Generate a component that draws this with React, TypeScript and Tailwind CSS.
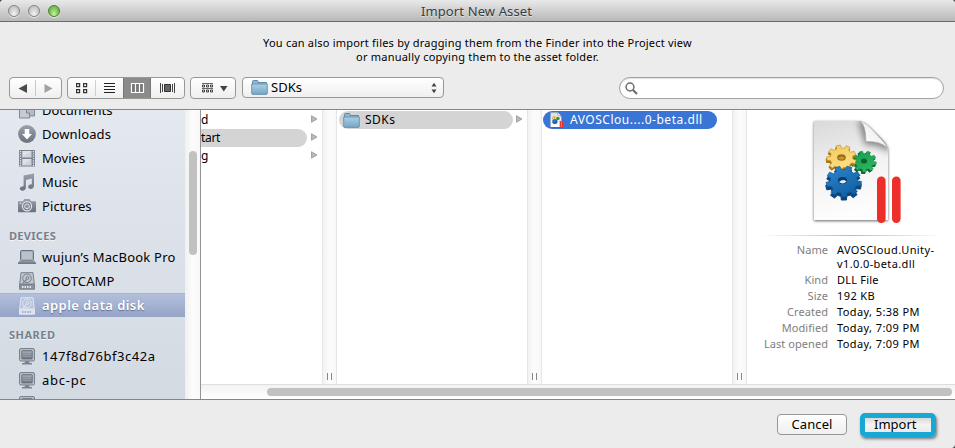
import React from "react";

type IconProps = { selected?: boolean };

const Tone = ({ id, light }: { id: string; light?: boolean }) => (
  <defs>
    <linearGradient id={id} x1="0" y1="0" x2="0" y2="1">
      <stop offset="0" stopColor={light ? "#e6eaf2" : "#9aa1ab"} />
      <stop offset="1" stopColor={light ? "#ced6e6" : "#69727e"} />
    </linearGradient>
  </defs>
);

const DocumentsIcon = () => (
  <svg width="18" height="18" viewBox="0 0 18 18">
    <path d="M1.500 7.500h10v9.500h-10z" fill="#c5cbd3" stroke="#7d8692" />
    <path d="M8.500 1.500h8v13.500h-5v-3h-3z" fill="#b4bbc5" stroke="#7d8692" />
  </svg>
);

const DownloadsIcon = () => (
  <svg width="18" height="18" viewBox="0 0 18 18">
    <Tone id="dl" />
    <circle cx="9" cy="9" r="8.900" fill="url(#dl)" />
    <path d="M6.700 4h4.600v5h2.700L9 14.500 4 9h2.700z" fill="#fff" />
  </svg>
);

const MoviesIcon = () => (
  <svg width="18" height="18" viewBox="0 0 18 18">
    <rect x="1" y="1" width="16" height="16.500" fill="#7a838f" />
    <path d="M2.500 2v15M15.500 2v15" stroke="#e6eaf0" strokeWidth="1.300" strokeDasharray="1.200 1.100" />
    <path d="M4.500 2h9v6.500h-9zM4.500 10h9v6.500h-9z" fill="#cfd5dd" />
    <path d="M4.500 2h9L4.500 8.500zM4.500 10h9l-9 6.500z" fill="#dde2e9" />
  </svg>
);

const MusicIcon = () => (
  <svg width="18" height="18" viewBox="0 0 18 18">
    <Tone id="mu" />
    <path d="M5.600 2.600 16 .4v12.400c0 2-1.300 3.100-3.200 3.100-1.600 0-2.700-.8-2.700-2.100 0-1.700 1.700-2.700 3.700-2.400V5.600L7.900 6.900v7.700c0 2-1.400 3.200-3.400 3.200-1.600 0-2.700-.9-2.700-2.200 0-1.700 1.700-2.700 3.800-2.400z" fill="url(#mu)" />
  </svg>
);

const PicturesIcon = () => (
  <svg width="18" height="18" viewBox="0 0 18 18">
    <Tone id="pi" />
    <path d="M1 4.200h4L6.300 2h5.400L13 4.200h4c.6 0 1 .4 1 1v9c0 .6-.4 1-1 1H1c-.6 0-1-.4-1-1v-9c0-.6.400-1 1-1z" fill="url(#pi)" />
    <circle cx="9" cy="9.300" r="4.600" fill="#7b848f" stroke="#dfe3e9" strokeWidth="1.200" />
    <circle cx="9" cy="9.300" r="2.400" fill="#8d95a1" stroke="#dfe3e9" />
    <circle cx="2.600" cy="6.200" r=".8" fill="#e3e6eb" />
  </svg>
);

const LaptopIcon = () => (
  <svg width="18" height="18" viewBox="0 0 18 18">
    <Tone id="lp" />
    <rect x="2.500" y="2.500" width="13" height="10" rx="1" fill="#a5adb8" stroke="#69727e" />
    <path d="M4 4h10v7H4z" fill="#bac1ca" />
    <path d="M1.500 12.500h15l1.500 2.500v1H0v-1z" fill="url(#lp)" />
  </svg>
);

const DiskIcon = ({ selected }: IconProps) => {
  const edge = selected ? "#e0e6f1" : "#77808b";
  const body = selected ? "#b9c4dc" : "#c1c7cf";
  return (
    <svg width="18" height="18" viewBox="0 0 18 18">
      <path d="M3 .7h12l1.300 11.300H1.700z" fill={body} stroke={edge} />
      <path d="M1.500 12.500h15v4.700h-15z" fill={selected ? "#dce3ef" : "#8b939e"} stroke={edge} />
      <circle cx="9" cy="6.300" r="4.300" fill="none" stroke={edge} strokeWidth="1" />
      <circle cx="9.500" cy="6" r="1.400" fill="none" stroke={edge} />
      <path d="M5 11l3.500-3.500" stroke={edge} strokeWidth="1.300" />
      <path d="M4 15h10" stroke={selected ? "#a4b1cf" : "#e0e4e9"} strokeWidth="2" strokeDasharray="1.500 1" />
    </svg>
  );
};

const MonitorIcon = () => (
  <svg width="18" height="18" viewBox="0 0 18 18">
    <Tone id="mo" />
    <rect x="1.500" y="1.500" width="15" height="12.500" rx="1.500" fill="#b7bec8" stroke="#78818c" />
    <rect x="3.700" y="3.500" width="10.600" height="8.500" rx=".8" fill="url(#mo)" stroke="#69727e" strokeWidth=".8" />
    <path d="M4.500 5.500h9M4.500 7.500h9M4.500 9.500h9" stroke="#a8b0bb" strokeWidth=".6" />
    <path d="M7 14h4l.5 2H14v1.500H4V16h2.500z" fill="#7a838e" />
  </svg>
);

const FolderIcon = () => (
  <svg width="17" height="15" viewBox="0 0 17 15" className="shrink-0">
    <defs>
      <linearGradient id="fold" x1="0" y1="0" x2="0" y2="1">
        <stop offset="0" stopColor="#abd0e6" />
        <stop offset="1" stopColor="#75a6c6" />
      </linearGradient>
    </defs>
    <path d="M1.500 3V1.500c0-.6.300-1 1-1h3.600c.6 0 .9.400 1 1L7.200 2.500h8.300v3h-14z" fill="#8fb9d3" stroke="#608ba6" />
    <path d="M.7 4h15.600v9.200c0 .8-.4 1.200-1 1.200H1.700c-.6 0-1-.4-1-1.200z" fill="url(#fold)" stroke="#6590ac" strokeWidth=".9" />
  </svg>
);

/* Outline of a toothed wheel with flat-topped teeth. */
function gearPath(cx: number, cy: number, r: number, teeth: number, turn: number) {
  const points: string[] = [];
  const shape: [number, number][] = [[-0.3, 0.77], [-0.21, 1], [0.21, 1], [0.3, 0.77]];
  for (let i = 0; i < teeth; i++) {
    for (const [offset, scale] of shape) {
      const a = ((i + offset) / teeth) * Math.PI * 2 + turn;
      points.push(`${(cx + Math.cos(a) * r * scale).toFixed(2)} ${(cy + Math.sin(a) * r * scale * 0.88).toFixed(2)}`);
    }
  }
  return `M${points.join("L")}Z`;
}

const Gears = () => (
  <g strokeLinejoin="round">
    <path d={gearPath(56.500, 44, 12, 9, 0.2)} fill="#09652d" stroke="#09652d" />
    <path d={gearPath(57.500, 42.500, 12, 9, 0.2)} fill="url(#gg)" stroke="#128940" strokeWidth=".5" />
    <ellipse cx="57" cy="42" rx="3" ry="2.500" fill="#075f2a" />
    <path d={gearPath(34, 41, 14.800, 9, 0.3)} fill="#a97510" stroke="#a97510" />
    <path d={gearPath(34.500, 39, 14.800, 9, 0.3)} fill="url(#gy)" stroke="#bd8b24" strokeWidth=".6" />
    <ellipse cx="34.500" cy="38.500" rx="4.300" ry="3.200" fill="#9b6d12" />
    <path d="M31 39q3.500-3 7 0-3.500 3.500-7 0z" fill="#c7952e" />
    <path d={gearPath(36.500, 65.500, 17.800, 9, 0.15)} fill="#07457c" stroke="#07457c" />
    <path d={gearPath(36.800, 62.500, 17.800, 9, 0.15)} fill="url(#gb)" stroke="#0e568f" strokeWidth=".6" />
    <ellipse cx="35.500" cy="61.500" rx="4.500" ry="3.400" fill="#063c70" />
    <path d="M32 63q4-3.500 7.500-.5-3.500 3.500-7.500.5z" fill="#e0edf7" />
  </g>
);

const DllIcon = ({ className, viewBox }: { className: string; viewBox: string }) => (
  <svg className={className} viewBox={viewBox}>
    <defs>
      <linearGradient id="page" x1="0" y1="0" x2="0.2" y2="1">
        <stop offset="0" stopColor="#d9d9d9" />
        <stop offset=".55" stopColor="#f3f3f3" />
        <stop offset="1" stopColor="#fdfdfd" />
      </linearGradient>
      <linearGradient id="curl" x1="0" y1="1" x2="1" y2="0">
        <stop offset="0" stopColor="#fff" />
        <stop offset=".5" stopColor="#f4f4f4" />
        <stop offset="1" stopColor="#aaa" />
      </linearGradient>
      <linearGradient id="gy" x1="0" y1="0" x2="0.4" y2="1">
        <stop offset="0" stopColor="#f1c85b" />
        <stop offset="1" stopColor="#ffdf87" />
      </linearGradient>
      <linearGradient id="gb" x1="0" y1="0" x2="0.6" y2="1">
        <stop offset="0" stopColor="#2f86cc" />
        <stop offset="1" stopColor="#1160a5" />
      </linearGradient>
      <linearGradient id="gg" x1="0" y1="0" x2="0.6" y2="1">
        <stop offset="0" stopColor="#159c4b" />
        <stop offset="1" stopColor="#2eb564" />
      </linearGradient>
      <filter id="soft" x="-20%" y="-20%" width="140%" height="140%">
        <feDropShadow dx="0" dy="1" stdDeviation="1.500" floodOpacity=".6" />
      </filter>
      <filter id="fade" x="-50%" y="-50%" width="200%" height="200%">
        <feGaussianBlur stdDeviation="3" />
      </filter>
      <clipPath id="sheet">
        <path d="M7 2h46q5 1 9 5l15 15q4 4 4 9v70H7z" />
      </clipPath>
    </defs>
    <path d="M7 2h46q5 1 9 5l15 15q4 4 4 9v70H7z" fill="url(#page)" filter="url(#soft)" />
    <g clipPath="url(#sheet)">
      <path d="M51 2l7 24q14-1 24 8V18L60 0z" fill="#555" opacity=".65" filter="url(#fade)" />
    </g>
    <path d="M53 2q6 4 6 20.500 13-1 21.500 6-2-4-7.500-9.500L63 8Q58 3 53 2z" fill="url(#curl)" stroke="#aaa" strokeWidth=".5" />
    <Gears />
    <rect x="70" y="57.500" width="8.600" height="46.500" rx="4.200" fill="#ee2e29" />
    <rect x="85" y="57.500" width="8.600" height="46.500" rx="4.200" fill="#ee2e29" />
  </svg>
);

const SideRow = ({ icon, label, track, selected }: { icon: React.ReactNode; label: string; track: string; selected?: boolean }) => (
  <div
    className={`flex h-6 shrink-0 items-center gap-[6px] pl-[18px] text-[13px] ${
      selected ? "bg-linear-to-b from-[#b3bfdb] to-[#95a4c6] font-semibold text-white border-t border-[#a7b3cf] [text-shadow:0_1px_1px_rgba(50,70,110,0.6)]" : "text-black"
    }`}
  >
    <span className="flex w-[18px] shrink-0">{icon}</span>
    <span className={`whitespace-nowrap leading-5 ${selected ? "pb-px" : ""} ${track}`}>{label}</span>
  </div>
);

const SideHeading = ({ label, track }: { label: string; track: string }) => (
  <div className="flex h-[27px] shrink-0 items-end pb-[1px] pl-[9px] text-[11px] leading-4 font-bold text-[#76808c] [text-shadow:0_1px_0_rgba(255,255,255,0.7)]">
    <span className={track}>{label}</span>
  </div>
);

const Arrow = () => (
  <svg width="7" height="8" viewBox="0 0 7 8" className="mb-[2px] shrink-0">
    <path d="M.5.700 6 4 .5 7.300z" fill="#b8b8b8" stroke="#8e8e8e" strokeWidth=".7" />
  </svg>
);

const Divider = () => (
  <div className="flex w-[15px] shrink-0 items-end justify-center gap-[3px] border-x border-[#e6e6e6] bg-linear-to-r from-[#f2f2f2] via-[#fcfcfc] to-[#f8f8f8] pb-1">
    <span className="h-[7px] w-px bg-[#888]" />
    <span className="h-[7px] w-px bg-[#888]" />
  </div>
);

const Detail = ({ name, value, track }: { name: string; value: React.ReactNode; track: string }) => (
  <div className="flex gap-[9px] pb-[2px] leading-[14px]">
    <span className="w-[81px] shrink-0 text-right tracking-[0.050px] whitespace-nowrap text-[#7e7e7e]">{name}</span>
    <span className={`whitespace-nowrap text-black ${track}`}>{value}</span>
  </div>
);

const Light = ({ green }: { green?: boolean }) => (
  <span
    className={`h-3 w-3 rounded-full border shadow-[0_1px_0_rgba(255,255,255,0.6)] ${
      green ? "border-[#4b8233] bg-[radial-gradient(ellipse_at_50%_85%,#c9f5a0_0%,#8ccd62_45%,#5a9d3c_100%)]" : "border-[#858585] bg-[radial-gradient(ellipse_at_50%_85%,#f4f4f4_0%,#d2d2d2_50%,#b2b2b2_100%)]"
    }`}
  />
);

const box = "flex items-center rounded-[4px] border border-[#979797] bg-linear-to-b from-white via-[#f7f7f7] to-[#efefef]";

export default function App() {
  return (
    <div className="h-[448px] w-[955px] overflow-hidden bg-[#4b4b4b] font-['Noto_Sans','Open_Sans',sans-serif]">
      <div className="flex h-full flex-col overflow-hidden rounded-t-[4px] rounded-br-[4px] bg-[#ececec]">
        <header className="flex h-[22px] shrink-0 items-center border-b border-[#6b6b6b] bg-linear-to-b from-[#e9e9e9] to-[#b8b8b8]">
          <div className="flex w-[200px] gap-2 pl-2">
            <Light />
            <Light />
            <Light green />
          </div>
          <div className="flex-1 text-center text-[13px] leading-5 text-[#3c3c3c] [text-shadow:0_1px_0_rgba(255,255,255,0.5)]">
            <span className="tracking-[0.120px]">Import New Asset</span>
          </div>
          <div className="w-[202px]" />
        </header>

        <div className="h-[55px] shrink-0 pt-[14px] text-center text-[11px] leading-[14px] text-black">
          <p><span className="tracking-[0.210px]">You can also import files by dragging them from the Finder into the Project view</span></p>
          <p><span className="tracking-[0.220px]">or manually copying them to the asset folder.</span></p>
        </div>

        <div className="flex h-8 shrink-0 items-start pl-[9px] pr-[11px]">
          <div className={`${box} h-[22px] w-[53px]`}>
            <svg width="51" height="20" viewBox="0 0 51 20">
              <path d="M17 6v9l-8.500-4.500z" fill="#4b4b4b" />
              <path d="M25.500 2v16" stroke="#c9c9c9" />
              <path d="M34.500 6v9l8-4.500z" fill="#a2a2a2" />
            </svg>
          </div>
          <div className={`${box} ml-[5px] h-[22px] w-[118px] overflow-hidden`}>
            <svg width="116" height="20" viewBox="0 0 116 20">
              <path d="M27.500 2v16" stroke="#cfcfcf" />
              <path d="M55 0h28v20H55z" fill="#8b8b8b" />
              <path d="M55.500 0v20M82.500 0v20" stroke="#777" />
              <g fill="none" stroke="#333" strokeWidth="1.200">
                <path d="M8.600 5.600h3v3h-3zM15.600 5.600h3v3h-3zM8.600 11.600h3v3h-3zM15.600 11.600h3v3h-3z" />
                <path d="M36 5.500h11M36 8.500h11M36 11.500h11M36 14.500h11" stroke="#222" strokeWidth="1" />
              </g>
              <path d="M63.500 5.500h12v9h-12zM67.500 6v8M71.500 6v8" fill="#777" stroke="#fff" strokeWidth="1.200" />
              <path d="M92.500 5v10M94.500 6v8M104.500 6v8M106.500 5v10" stroke="#444" />
              <path d="M96.500 6.500h6v7h-6z" fill="#666" stroke="#333" />
            </svg>
          </div>
          <div className={`${box} ml-[5px] h-[22px] w-[46px]`}>
            <svg width="44" height="20" viewBox="0 0 44 20">
              <path d="M11 5.500h11M11 10.500h11" stroke="#444" strokeWidth=".8" />
              <path d="M11.500 7h2v2h-2zM15.500 7h2v2h-2zM19.500 7h2v2h-2zM11.500 12h2v2h-2zM15.500 12h2v2h-2zM19.500 12h2v2h-2z" fill="none" stroke="#333" strokeWidth=".9" />
              <path d="M29 8h7.500l-3.700 5.500z" fill="#444" />
            </svg>
          </div>
          <div className={`${box} ml-[6px] h-[21px] w-[202px] pl-2 pr-[6px]`}>
            <FolderIcon />
            <span className="ml-[3px] flex-1 pb-px text-[13px] leading-5 tracking-[0px]">SDKs</span>
            <svg width="6" height="12" viewBox="0 0 6 12">
              <path d="M.5 4.500h5L3 .8zM.5 7.500h5L3 11.200z" fill="#444" />
            </svg>
          </div>
          <div className="ml-auto flex h-[22px] w-[325px] items-center rounded-full border border-[#a2a2a2] bg-white pl-[5px] shadow-[inset_0_1px_1px_rgba(0,0,0,0.12)]">
            <svg width="13" height="13" viewBox="0 0 13 13" fill="none" stroke="#6c6c6c">
              <circle cx="5" cy="5" r="3.900" strokeWidth="1.500" />
              <path d="m8 8 4 4" strokeWidth="2.200" />
            </svg>
          </div>
        </div>

        <main className="flex h-[291px] shrink-0 border-y border-[#858585]">
          <aside className="flex w-[185px] shrink-0 flex-col overflow-hidden bg-linear-to-b from-[#e4e8ef] to-[#d3dae2]">
            <div className="-mt-3 flex shrink-0 flex-col">
              <SideRow icon={<DocumentsIcon />} label="Documents" track="tracking-[0.050px]" />
              <SideRow icon={<DownloadsIcon />} label="Downloads" track="tracking-[0.100px]" />
              <SideRow icon={<MoviesIcon />} label="Movies" track="tracking-[0.050px]" />
              <SideRow icon={<MusicIcon />} label="Music" track="tracking-[0.100px]" />
              <SideRow icon={<PicturesIcon />} label="Pictures" track="tracking-[0.100px]" />
              <SideHeading label="DEVICES" track="tracking-[0.300px]" />
              <SideRow icon={<LaptopIcon />} label="wujun’s MacBook Pro" track="tracking-[0.200px]" />
              <SideRow icon={<DiskIcon />} label="BOOTCAMP" track="tracking-[0.120px]" />
              <SideRow icon={<DiskIcon selected />} label="apple data disk" track="tracking-[0.420px]" selected />
              <SideHeading label="SHARED" track="tracking-[0.500px]" />
              <SideRow icon={<MonitorIcon />} label="147f8d76bf3c42a" track="tracking-[0.550px]" />
              <SideRow icon={<MonitorIcon />} label="abc-pc" track="tracking-[0.750px]" />
              <SideRow icon={<MonitorIcon />} label="" track="" />
            </div>
          </aside>
          <div className="w-4 shrink-0 border-r border-[#949494] bg-linear-to-r from-[#f0f0f0] via-[#fcfcfc] to-[#f8f8f8] pl-1 pt-[41px]">
            <div className="h-[104px] w-2 rounded-full bg-[#c1c1c1]" />
          </div>

          <section className="flex min-w-0 flex-1 flex-col bg-white">
            <div className="flex h-[274px] shrink-0 text-[12px]">
              <div className="flex w-[121px] shrink-0 flex-col pt-px">
                {["d", "tart", "g"].map((name) => (
                  <div key={name} className="flex h-[18px] items-center justify-between pr-1">
                    <div className={`h-[18px] w-[106px] leading-[18px] ${name === "tart" ? "rounded-r-full bg-[#d4d4d4] tracking-[-0.300px]" : ""}`}>{name}</div>
                    <Arrow />
                  </div>
                ))}
              </div>
              <Divider />
              <div className="w-[190px] shrink-0 pl-[2px] pt-px">
                <div className="flex h-[18px] items-center gap-[3px]">
                  <div className="flex h-[18px] w-[174px] items-center rounded-full bg-[#d4d4d4] pl-1">
                    <FolderIcon />
                    <span className="ml-[5px] tracking-[0.500px]">SDKs</span>
                  </div>
                  <Arrow />
                </div>
              </div>
              <Divider />
              <div className="w-[190px] shrink-0 pl-px pt-px">
                <div className="flex h-[18px] w-[174px] items-center rounded-full bg-[#3a74d5] pl-[6px] text-white">
                  <DllIcon className="h-4 w-[15px]" viewBox="0 -2 96 110" />
                  <span className="ml-[6px] tracking-[0.520px] whitespace-nowrap">AVOSClou....0-beta.dll</span>
                </div>
              </div>
              <Divider />
              <div className="min-w-0 flex-1 text-[11px]">
                <div className="flex h-[125px] pl-[60px] pt-[9px]">
                  <DllIcon className="h-[110px] w-[100px]" viewBox="0 0 100 110" />
                </div>
                <div className="mx-3 h-px bg-linear-to-r from-transparent via-[#bbb] to-transparent" />
                <div className="pt-[7px]">
                  <Detail name="Name" track="tracking-[0.380px]" value={<>AVOSCloud.Unity-<br />v1.0.0-beta.dll</>} />
                  <Detail name="Kind" track="tracking-[0.200px]" value="DLL File" />
                  <Detail name="Size" track="tracking-[0.400px]" value="192 KB" />
                  <Detail name="Created" track="tracking-[0.400px]" value="Today, 5:38 PM" />
                  <Detail name="Modified" track="tracking-[0.400px]" value="Today, 7:09 PM" />
                  <Detail name="Last opened" track="tracking-[0.400px]" value="Today, 7:09 PM" />
                </div>
              </div>
            </div>
            <div className="flex flex-1 items-center border-t border-[#dedede] bg-linear-to-b from-[#f3f3f3] to-white pl-[66px] pr-[3px]">
              <div className="h-2 flex-1 rounded-full bg-[#c1c1c1]" />
            </div>
          </section>
        </main>

        <footer className="flex flex-1 items-start justify-end pr-[19px] pt-[13px] text-[13px] text-black">
          <button className="mt-px flex h-[21px] w-[70px] items-center justify-center rounded-[4px] border border-[#979797] bg-linear-to-b from-white via-[#f6f6f6] to-[#f0f0f0]">
            <span className="tracking-[0.100px]">Cancel</span>
          </button>
          <button className="ml-[13px] flex h-6 w-[76px] items-center rounded-[5px] border-[5px] border-[#18a8d5] bg-linear-to-b from-[#d9d9d9] via-[#f4f4f4] to-[#eaeaea] pl-[9px] shadow-[1px_2px_3px_rgba(0,0,0,0.5)]">
            <span className="pb-[2px] tracking-[0px] leading-[14px]">Import</span>
          </button>
        </footer>
      </div>
    </div>
  );
}
